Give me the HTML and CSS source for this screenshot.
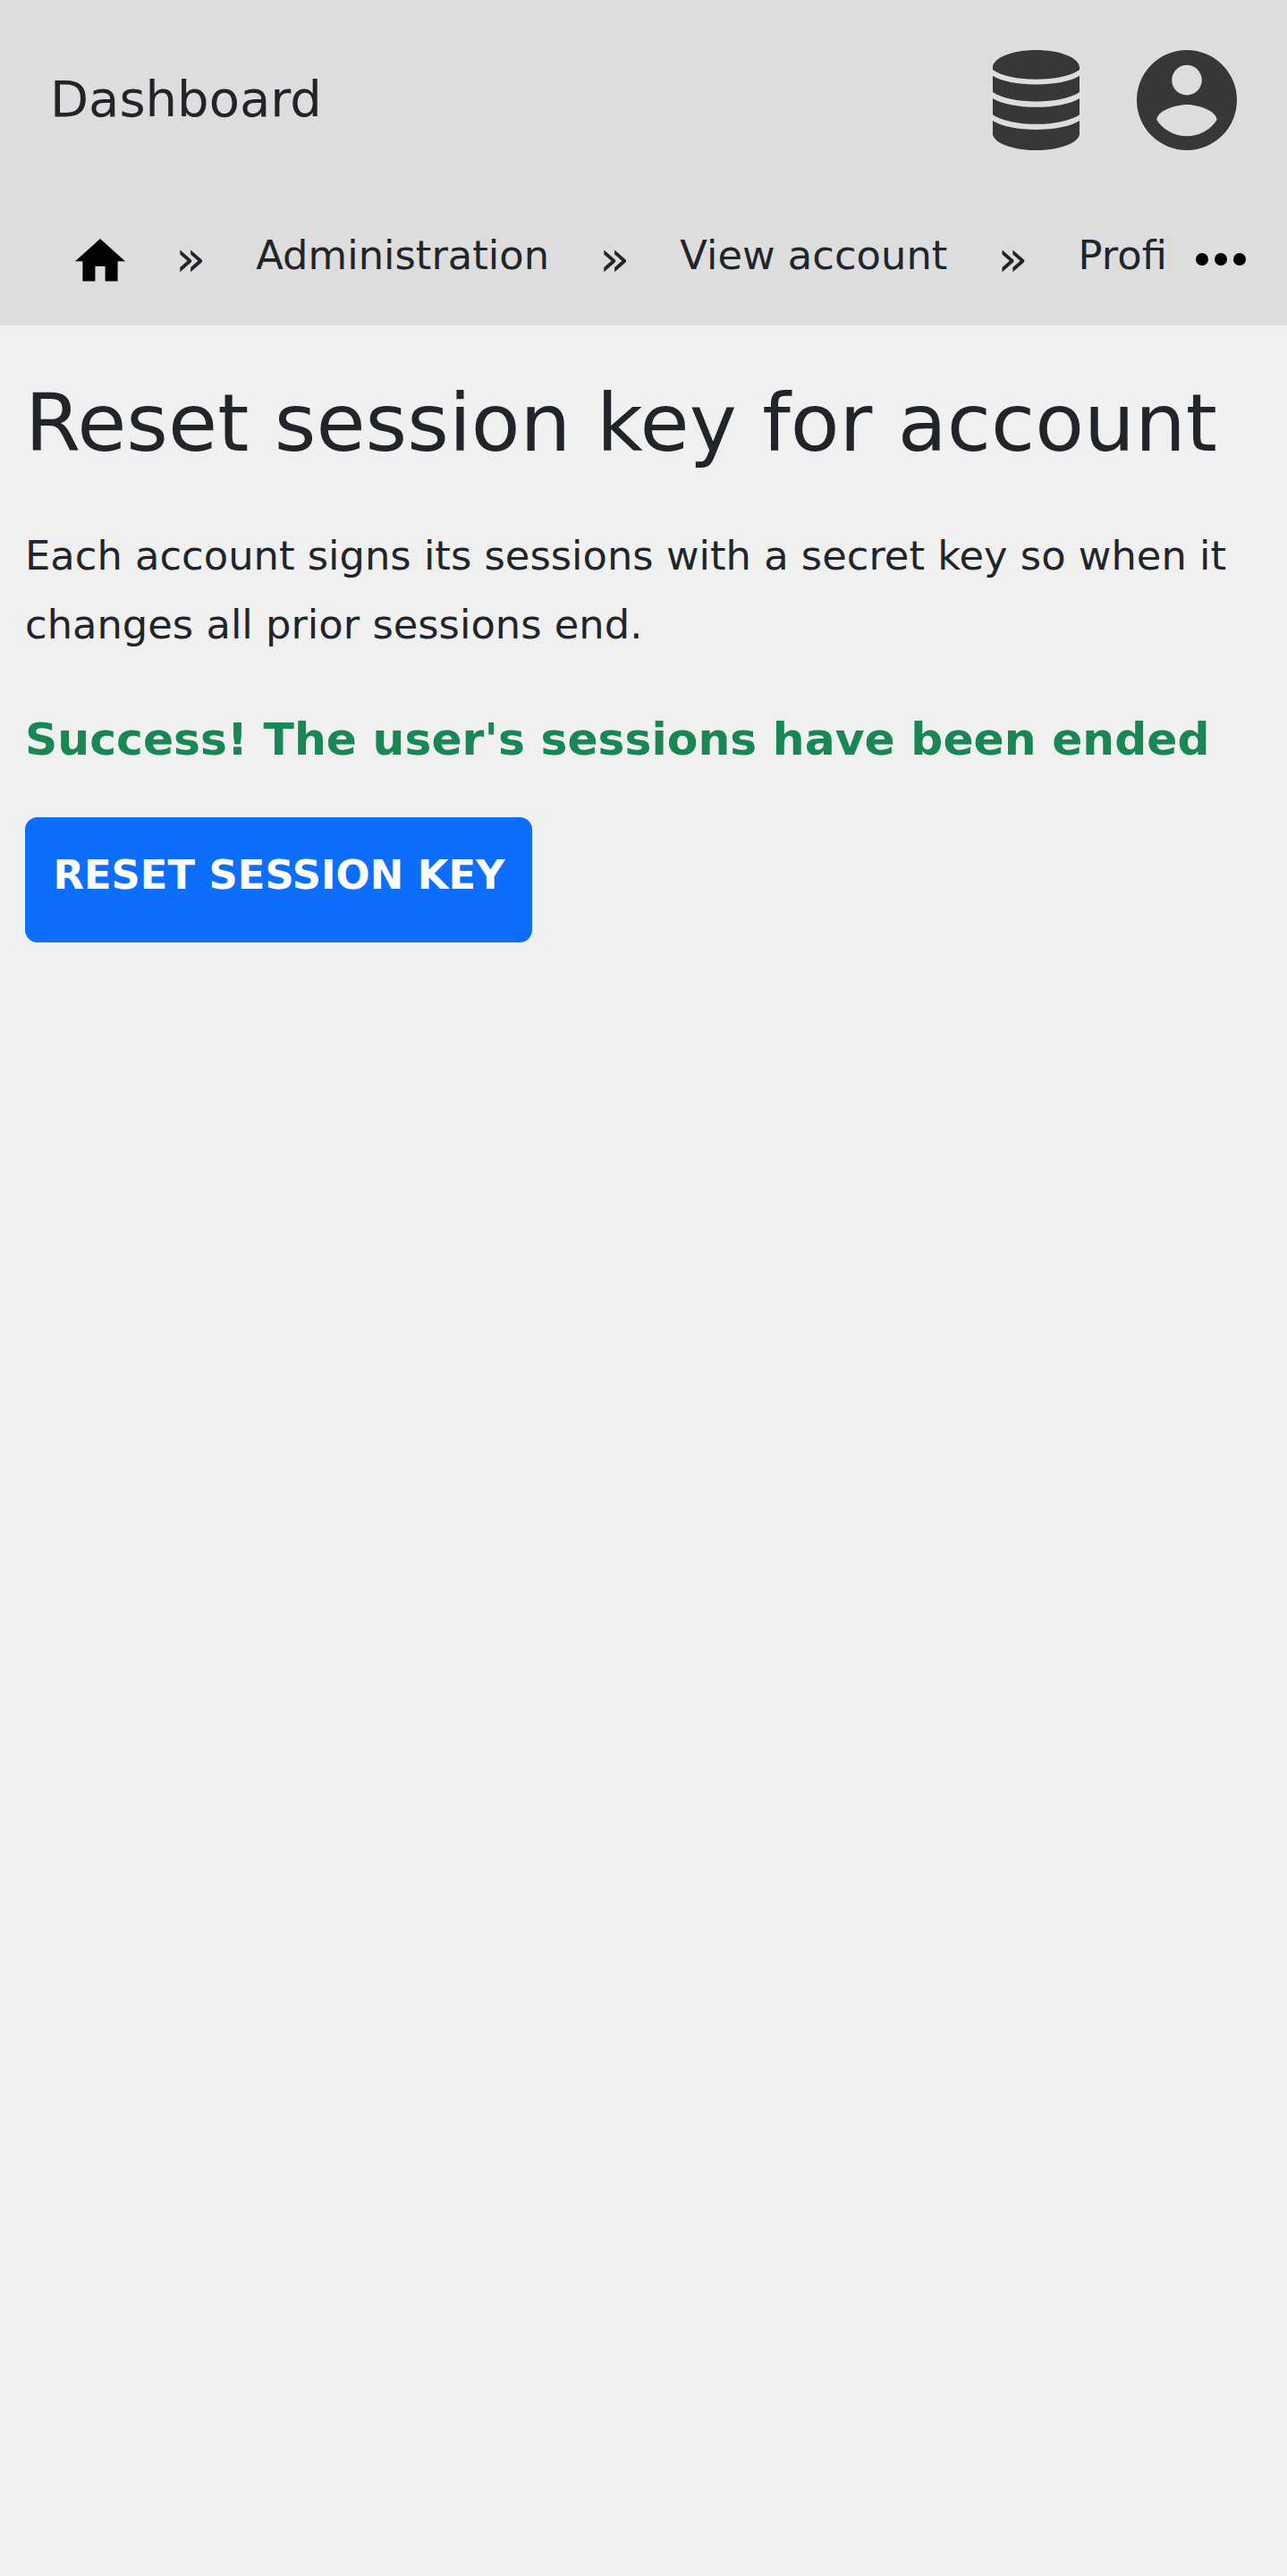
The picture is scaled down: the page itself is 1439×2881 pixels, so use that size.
FILE: index.html
```html
<!DOCTYPE html>
<html lang="en">
<head>
<meta charset="utf-8">
<title>Reset session key for account</title>
<link rel="stylesheet" href="styles.css">
</head>
<body>
<header class="header">
  <div class="topbar">
    <a class="brand">Dashboard</a>
    <svg class="icon-db" viewBox="0 0 97 112"><path d="M48.500 0C75.300 0 97 8.700 97 19.500V22C87 29 69 32.800 48.500 32.800S10 29 0 22V19.500C0 8.700 21.700 0 48.500 0ZM0 28.800C10 35 28 38.500 48.500 38.500S87 35 97 28.800V47C87 53.800 69 57.500 48.500 57.500S10 53.800 0 47ZM0 53.900C10 60.100 28 63.700 48.500 63.700S87 60.100 97 53.900V72.200C87 79 69 82.800 48.500 82.800S10 79 0 72.200ZM0 79C10 85.200 28 89 48.500 89S87 85.200 97 79V94.500C95 104.500 74 112 48.500 112S2 104.500 0 94.500Z"/></svg>
    <svg class="icon-user" viewBox="2 2 20 20"><path d="M12 19.200c-2.500 0-4.710-1.280-6-3.220.03-2 4-3.100 6-3.100 2 0 5.970 1.100 6 3.100a7.232 7.232 0 0 1-6 3.220M12 5a3 3 0 1 1 0 6 3 3 0 0 1 0-6m0-3a10 10 0 1 0 0 20 10 10 0 0 0 0-20"/></svg>
  </div>
  <nav class="crumbs">
    <div class="trail">
      <a class="home"><svg class="icon-home" viewBox="2 3 20 17"><path d="M10 20v-6h4v6h5v-8h3L12 3 2 12h3v8z"/></svg></a>
      <span class="sep">»</span>
      <a class="crumb">Administration</a>
      <span class="sep">»</span>
      <a class="crumb">View account</a>
      <span class="sep">»</span>
      <a class="crumb">Profile</a>
    </div>
    <svg class="icon-more" viewBox="0 0 16 4"><circle cx="2" cy="2" r="2"/><circle cx="8" cy="2" r="2"/><circle cx="14" cy="2" r="2"/></svg>
  </nav>
</header>
<main class="content">
  <h1 class="title">Reset session key for account</h1>
  <p class="text">Each account signs its sessions with a secret key so when it changes all prior sessions end.</p>
  <p class="success">Success! The user's sessions have been ended</p>
  <button class="button">RESET SESSION KEY</button>
</main>
</body>
</html>
```
FILE: styles.css
```css
* { box-sizing: border-box; }
body {
  margin: 0;
  min-height: 2881px;
  background: #f0f0f0;
  color: #212529;
  font-family: "DejaVu Sans", sans-serif;
  font-size: 44.8px;
}
svg { display: block; flex: none; }
.header { height: 364px; background: #ddd; }
.topbar {
  display: flex;
  align-items: center;
  height: 224px;
  padding: 0 56.500px 0 56px;
}
.brand { flex: 1; font-size: 56px; line-height: 84px; padding-bottom: 3px; }
.icon-db { width: 97px; height: 112px; margin-right: 63.500px; fill: #373737; }
.icon-user { width: 112px; height: 112px; fill: #373737; }
.crumbs { display: flex; height: 140px; padding-right: 46px; }
.trail {
  display: flex;
  width: 1309px;
  overflow: hidden;
  white-space: nowrap;
  padding-left: 84px;
}
.home { padding-top: 43px; margin-right: 56px; }
.icon-home { width: 56px; height: 47.600px; }
.sep { font-size: 56px; line-height: 84px; padding-top: 22.500px; margin-right: 56px; }
.crumb { line-height: 77px; padding-top: 23px; margin-right: 56px; }
.icon-more { width: 56px; height: 14px; margin: 59.300px 0 0 28px; }
.content { padding: 56px 28px; }
.title { margin: 0; font-size: 89.600px; font-weight: 400; line-height: 106px; white-space: nowrap; }
.text { margin: 57px 0 0; line-height: 77px; }
.success { margin: 47.500px 0 0; color: #198754; font-size: 50.400px; font-weight: 700; line-height: 84px; white-space: nowrap; }
.button {
  display: block;
  width: 567px;
  height: 140px;
  margin: 45px 0 0;
  padding: 0 0 10px 1px;
  border: 0;
  border-radius: 14px;
  background: #0d6efd;
  color: #fff;
  font: 700 44.800px "DejaVu Sans", sans-serif;
}
```
